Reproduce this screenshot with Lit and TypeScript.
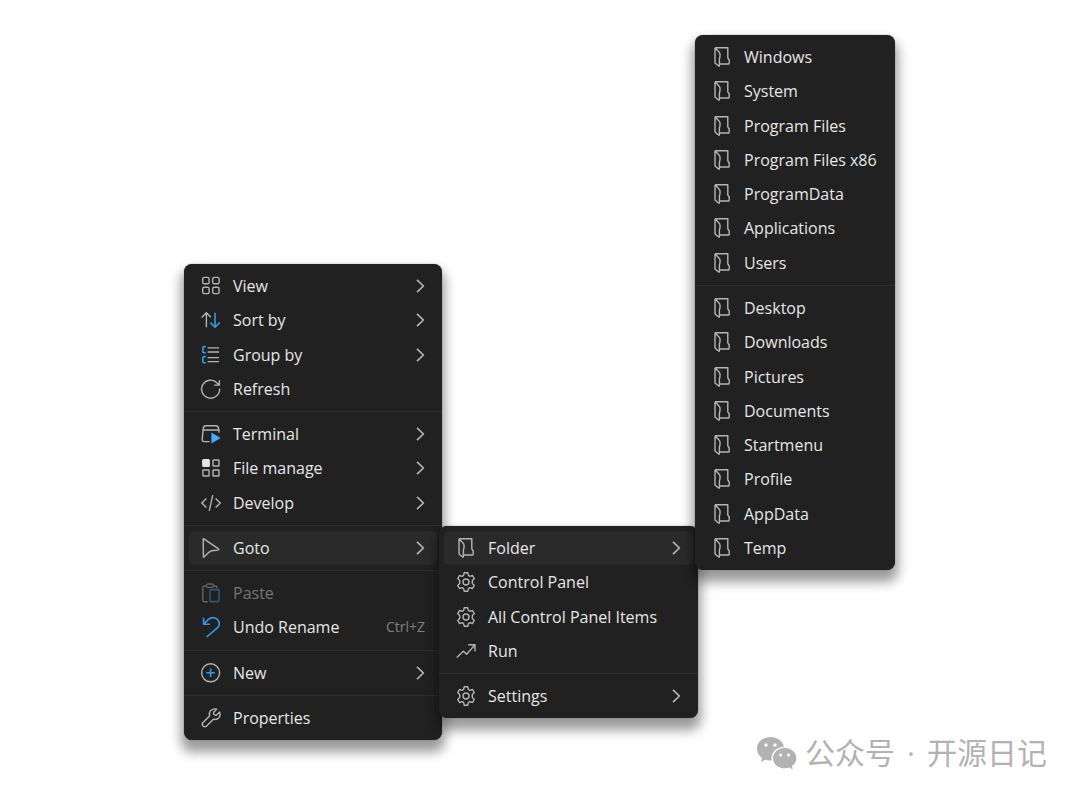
import { LitElement, html, svg, css, nothing, TemplateResult } from "lit";
import { customElement, property } from "lit/decorators.js";

type Entry =
  | "-"
  | { label: string; icon: string; more?: boolean; keys?: string; off?: boolean; open?: boolean };

const folder = (label: string): Entry => ({ label, icon: "folder" });

const mainMenu: Entry[] = [
  { label: "View", icon: "view", more: true },
  { label: "Sort by", icon: "sort", more: true },
  { label: "Group by", icon: "group", more: true },
  { label: "Refresh", icon: "refresh" },
  "-",
  { label: "Terminal", icon: "terminal", more: true },
  { label: "File manage", icon: "files", more: true },
  { label: "Develop", icon: "develop", more: true },
  "-",
  { label: "Goto", icon: "goto", more: true, open: true },
  "-",
  { label: "Paste", icon: "paste", off: true },
  { label: "Undo Rename", icon: "undo", keys: "Ctrl+Z" },
  "-",
  { label: "New", icon: "add", more: true },
  "-",
  { label: "Properties", icon: "wrench" },
];

const gotoMenu: Entry[] = [
  { label: "Folder", icon: "folder", more: true, open: true },
  { label: "Control Panel", icon: "gear" },
  { label: "All Control Panel Items", icon: "gear" },
  { label: "Run", icon: "run" },
  "-",
  { label: "Settings", icon: "gear", more: true },
];

const folderMenu: Entry[] = [
  ...["Windows", "System", "Program Files", "Program Files x86", "ProgramData", "Applications", "Users"].map(folder),
  "-",
  ...["Desktop", "Downloads", "Pictures", "Documents", "Startmenu", "Profile", "AppData", "Temp"].map(folder),
];

const gearPath =
  "M8.2 .8h3.6l.6 2.6 1.5.9 2.6-.8 1.8 3.1-2 1.9v3l2 1.9-1.8 3.1-2.6-.8-1.5.9-.6 2.6H8.2l-.6-2.6-1.5-.9-2.6.8-1.8-3.1 2-1.9v-3l-2-1.9 1.8-3.1 2.6.8 1.5-.9z";

const icons: Record<string, TemplateResult> = {
  view: svg`<rect x="1.7" y="1.4" width="6.4" height="6.4" rx="1.6"/><rect x="11.7" y="1.4" width="6.4" height="6.4" rx="1.6"/><rect x="1.7" y="11.2" width="6.4" height="6.4" rx="1.6"/><rect x="11.7" y="11.2" width="6.4" height="6.4" rx="1.6"/>`,
  sort: svg`<path d="M5.4 17.2V2.8M.6 7.6l4.8-4.8 4.4 4.4"/><path class="blue" d="M14 2.8v14.4M9.4 12.6l4.6 4.6 4.8-4.8"/>`,
  group: svg`<path class="blue" d="M4.8 1.6H3.2q-1.4 0-1.4 1.4v3.4q0 1.4 1.4 1.4h1.6M4.8 11.6H3.2q-1.4 0-1.4 1.4v3.4q0 1.4 1.4 1.4h1.6"/><path d="M6.6 2.9h11.4M6.6 7h11.4M6.6 12.6h11.4M6.6 16.6h11.4"/>`,
  refresh: svg`<path d="M18.6 9.6a9 9 0 1 1-2.5-5.7L18.4 6M18.4 1.2v4.9h-5.2"/>`,
  terminal: svg`<path d="M8.6 17.6H3.4q-2.4 0-2.2-2.4L2.2 4.6Q2.5 1.8 5.2 1.8h9.4q2.6 0 3 2.8l.5 4M2.3 6h15.2"/><path class="fill" d="M10.4 8.6v10.8l9.2-5.4z"/>`,
  files: svg`<rect class="solid" x="1.8" y="1.8" width="6.4" height="6.4" rx=".8"/><rect x="12" y="2" width="6" height="6" rx=".6"/><rect x="1.9" y="12" width="6.2" height="6" rx=".6"/><rect x="12" y="12" width="6" height="6" rx=".6"/>`,
  develop: svg`<path d="M5.4 5.4.8 10l4.6 4.6M14.6 5.4l4.6 4.6-4.6 4.6M11.8 2.2 8.2 17.8"/>`,
  goto: svg`<path d="M2.2 1.4Q1.8.3 2.9.9l14.6 10q.9.9-.4 1.2l-6.2.6-3.6 2-4 4.1q-.9.9-.9-.4z"/>`,
  paste: svg`<path d="M5.6 3H3.4Q1.8 3 1.8 4.6v12.6q0 1.6 1.6 1.6h3.4M12.6 3h2q1.4 0 1.4 1.6v.8"/><rect x="5.4" y="1" width="7.2" height="3.4" rx="1.6"/><rect class="blue" x="9" y="6.6" width="9" height="12" rx="1"/>`,
  undo: svg`<path class="blue" d="M2.6.8v6.4h6.2M2.8 7 7.4 2.4q4.2-3.4 8.6-.4 4.4 4.400.6 8.600L5.600 20"/>`,
  add: svg`<circle cx="9.6" cy="9.8" r="9"/><path class="blue" d="M9.6 5.6v8.4M5.4 9.8h8.4"/>`,
  wrench: svg`<path d="M15.6 1.2 12.6 4.2q-.4 1.6.4 2.4.9.9 2.6.4L18.6 4Q20 8.2 17.2 10.4 15 12 12.4 11.2L5.6 18q-1.6 1.6-3.4.2-1.8-1.9-.2-3.6L8.6 8Q7.6 4.8 9.8 2.4 12.4.1 15.6 1.2z"/>`,
  folder: svg`<path d="M3 .8H15.8V10.8l1.4 2.2V16.2q0 .8-.8.8H7.4"/><path d="M3 .8V16L6.6 19q.8.6.8-.4V12.2L8 9.6V7Q7.8 5.8 7.2 5.2L3 .8"/>`,
  gear: svg`<path d="${gearPath}"/><circle cx="10" cy="10" r="3"/>`,
  run: svg`<path d="M.8 16.6 7.4 10.2 10.6 13.2 18.8 4M12.2 3.8h6.8v6.4"/>`,
};

@customElement("menu-panel")
export class MenuPanel extends LitElement {
  @property({ attribute: false }) entries: Entry[] = [];
  @property() name = "";

  static styles = css`
    :host {
      display: flex;
      box-sizing: border-box;
      border-radius: 8px;
      background: #212121;
      box-shadow: 0 9px 12px 3px rgba(0, 0, 0, 0.4), 0 0 1px rgba(0, 0, 0, 0.6);
    }
    .menu {
      flex: 1;
      display: flex;
      flex-direction: column;
      padding: 5px;
    }
    .item {
      flex: 1 0 34px;
      display: flex;
      align-items: center;
      gap: 12px;
      margin: 0;
      padding: 0 12px;
      border: 0;
      border-radius: 5px;
      background: none;
      color: #e6e6e6;
      font: 16px/24px "Open Sans", "Noto Sans", sans-serif;
      text-align: left;
      white-space: nowrap;
    }
    .item:hover,
    .open {
      background: #2a2a2a;
    }
    .item:disabled {
      color: #757575;
      background: none;
    }
    .item:disabled .icon {
      opacity: 0.45;
    }
    .label {
      flex: 1;
    }
    .keys {
      color: #808080;
      font-size: 14px;
    }
    .rule {
      flex: none;
      height: 1px;
      margin: 5px -5px;
      border: 0;
      background: #2e2e2e;
    }
    .icon,
    .chevron {
      flex: none;
      fill: none;
      stroke: #b4b4b4;
      stroke-width: 1.4;
      stroke-linejoin: round;
      overflow: visible;
    }
    .chevron {
      stroke-width: 1.7;
    }
    .blue {
      stroke: #2f9be6;
      stroke-width: 1.6;
    }
    .fill {
      fill: #42aaff;
      stroke: none;
    }
    .solid {
      fill: #e4e4e4;
      stroke: #e4e4e4;
    }
  `;

  private row(e: Entry) {
    if (e === "-") return html`<hr class="rule" />`;
    return html`<button
      class="item ${e.open ? "open" : ""}"
      role="menuitem"
      ?disabled=${e.off}
      aria-haspopup=${e.more ? "menu" : nothing}
      aria-expanded=${e.open ? "true" : nothing}
    >
      <svg class="icon" width="20" height="20" viewBox="0 0 20 20" aria-hidden="true">${icons[e.icon]}</svg>
      <span class="label">${e.label}</span>
      ${e.keys ? html`<span class="keys">${e.keys}</span>` : nothing}
      ${e.more
        ? html`<svg class="chevron" width="9" height="14" viewBox="0 0 9 14" aria-hidden="true"><path d="M1 .8 7.4 7 1 13.2" /></svg>`
        : nothing}
    </button>`;
  }

  render() {
    return html`<div class="menu" role="menu" aria-label=${this.name}>${this.entries.map((e) => this.row(e))}</div>`;
  }
}

@customElement("app-root")
export class AppRoot extends LitElement {
  static styles = css`
    :host {
      display: block;
    }
    .desktop {
      position: relative;
      box-sizing: border-box;
      min-height: 100vh;
      display: flex;
      align-items: flex-end;
      justify-content: flex-end;
      padding: 24px 33px;
      background: #fff;
    }
    .main,
    .goto,
    .folders {
      position: absolute;
    }
    .main {
      left: 184px;
      top: 264px;
      width: 258px;
      min-height: 476px;
    }
    .goto {
      left: 439px;
      top: 526px;
      width: 259px;
      min-height: 192px;
    }
    .folders {
      left: 695px;
      top: 35px;
      width: 200px;
      min-height: 535px;
    }
    .credit,
    .words {
      display: flex;
      align-items: center;
      gap: 8px;
    }
    .words {
      gap: 12px;
      color: #b2b2b2;
      font: 30px/40px "Open Sans", "Noto Sans CJK SC", sans-serif;
    }
    .logo {
      fill: #b2b2b2;
    }
    .gap {
      fill: #fff;
    }
  `;

  render() {
    return html`<main class="desktop">
      <menu-panel class="main" name="Desktop" .entries=${mainMenu}></menu-panel>
      <menu-panel class="goto" name="Goto" .entries=${gotoMenu}></menu-panel>
      <menu-panel class="folders" name="Folder" .entries=${folderMenu}></menu-panel>
      <div class="credit">
        <svg class="logo" width="41" height="34" viewBox="0 0 41 34" aria-hidden="true">
          <path d="M14.5 1C6.8 1 1 6 1 12.8c0 3.8 1.9 7 5 9.2L4.8 26l4.6-2.3c1.7.5 3.4.8 5.2.7 8-.1 13.5-5.4 13.5-11.8S22.2 1 14.5 1z" />
          <path class="gap" d="M28.5 10.8c-7.4 0-13 5-13 11.3s5.6 11.4 13 11.4h12.3V22c0-6.3-5-11.2-12.3-11.2z" />
          <path d="M28.6 12C21.9 12 17 16.500 17 22.2s4.9 10.1 11.6 10.1c1.6 0 3.100-.2 4.500-.7l3.700 2-.9-3.600c2.800-1.900 4.500-4.600 4.500-7.800C40.400 16.500 35.300 12 28.600 12z" />
          <g class="gap"><circle cx="10" cy="9" r="1.7" /><circle cx="19" cy="9" r="1.7" /><circle cx="24.6" cy="19" r="1.5" /><circle cx="32.5" cy="19" r="1.5" /></g>
        </svg>
        <div class="words"><span>公众号</span><span>·</span><span>开源日记</span></div>
      </div>
    </main>`;
  }
}
